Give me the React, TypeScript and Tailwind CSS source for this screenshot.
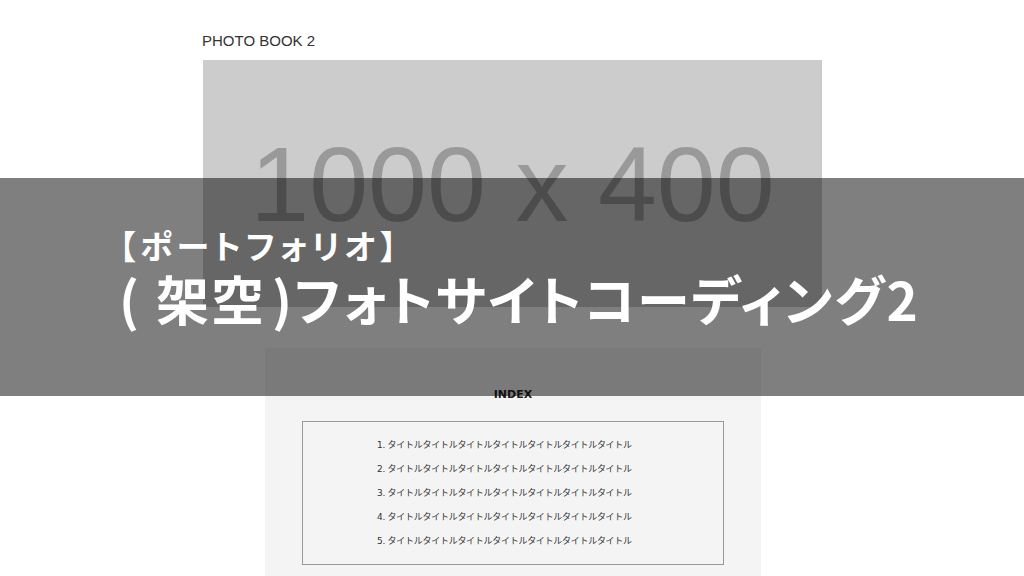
import React from 'react';

const titles = [1, 2, 3, 4, 5];

const App: React.FC = () => {
  return (
    <div className="relative w-[1024px] h-[576px] overflow-hidden bg-white">
      {/* Page underneath */}
      <div className="flex flex-col items-start pl-[202px] pt-[32px]">
        <h2 className="text-[15px] leading-[18px] text-[#333] font-['Liberation_Sans',Arial,sans-serif]">
          PHOTO BOOK 2
        </h2>
        <div className="mt-[10px] ml-[1px] w-[619px] h-[247px] bg-[#cccccc] flex items-center justify-center">
          <span className="text-[106px] leading-none text-[#999999] font-['Liberation_Sans',Arial,sans-serif]">
            1000 x 400
          </span>
        </div>
        <div className="mt-[41px] ml-[63px] w-[496px] bg-[#f4f4f4] px-[37px] pt-[40px] pb-[20px]">
          <h3 className="text-center text-[11px] leading-[14px] font-bold text-[#222] font-['DejaVu_Sans',Verdana,sans-serif]">
            INDEX
          </h3>
          <ol className="mt-[19px] border border-[#999] py-[14px] pl-[74px] flex flex-col gap-[6px]">
            {titles.map((n) => (
              <li
                key={n}
                className="text-[9px] leading-[18px] tracking-[-0.28px] text-[#333] font-['DejaVu_Sans','Noto_Sans_CJK_JP',sans-serif]"
              >
                {n}. タイトルタイトルタイトルタイトルタイトルタイトルタイトル
              </li>
            ))}
          </ol>
        </div>
      </div>

      {/* Title band */}
      <div className="absolute left-0 top-[178px] w-full h-[218px] bg-black/50 pl-[119px] pt-[48px] text-white font-['Noto_Sans_CJK_JP',sans-serif] font-bold [font-feature-settings:'palt']">
        <p className="text-[33px] leading-[38px] tracking-[4.6px]">【ポートフォリオ】</p>
        <p className="mt-[4px] text-[53px] leading-[60px] tracking-[2px]">
          <span className="mr-[15px]">(</span>架空<span className="ml-[6px]">)</span>フォトサイトコーディング2
        </p>
      </div>
    </div>
  );
};

export default App;
